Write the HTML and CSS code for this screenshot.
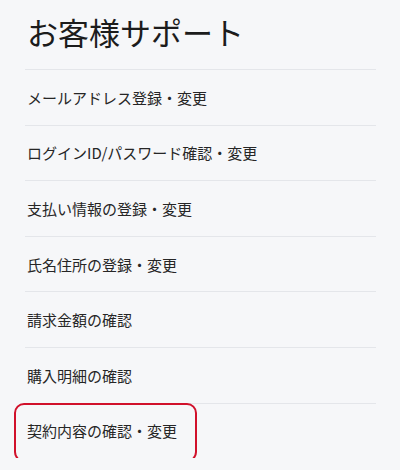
FILE: index.html
```html
<!DOCTYPE html>
<html lang="ja">
<head>
    <meta charset="UTF-8">
    <meta name="viewport" content="width=device-width, initial-scale=1.0">
    <title>お客様サポート</title>
    <link rel="stylesheet" href="styles.css">
</head>
<body>
<main class="support">
    <h1 class="support-title">お客様サポート</h1>
    <!-- Support menu -->
    <ul class="menu">
        <li class="menu-item">メールアドレス登録・変更</li>
        <li class="menu-item">ログインID/パスワード確認・変更</li>
        <li class="menu-item">支払い情報の登録・変更</li>
        <li class="menu-item">氏名住所の登録・変更</li>
        <li class="menu-item">請求金額の確認</li>
        <li class="menu-item">購入明細の確認</li>
        <li class="menu-item highlight">契約内容の確認・変更</li>
    </ul>
</main>
</body>
</html>
```

FILE: styles.css
```css
body {
    font-family: "Noto Sans CJK JP", "Noto Sans", sans-serif;
    background-color: #f6f7f9;
    color: #222;
    margin: 0;
    padding: 0;
}

.support {
    padding: 0 24px 0 25px;
}

.support-title {
    height: 69px;
    margin: 0;
    padding: 12px 0 0 2px;
    box-sizing: border-box;
    font-size: 31px;
    font-weight: 400;
    line-height: 40px;
    color: #1c1c1c;
}

.menu {
    list-style: none;
    margin: 0;
    padding: 0;
}

.menu-item {
    display: flex;
    align-items: center;
    height: 55.6px;
    box-sizing: border-box;
    padding: 0 0 0 2px;
    border-top: 1.5px solid #e4e6ea;
    font-size: 15px;
    color: #262626;
    position: relative;
}

.highlight::after {
    content: "";
    position: absolute;
    left: -11px;
    top: -1px;
    width: 183px;
    height: 59px;
    box-sizing: border-box;
    border: 2px solid #d1112b;
    border-radius: 10px;
}
```
